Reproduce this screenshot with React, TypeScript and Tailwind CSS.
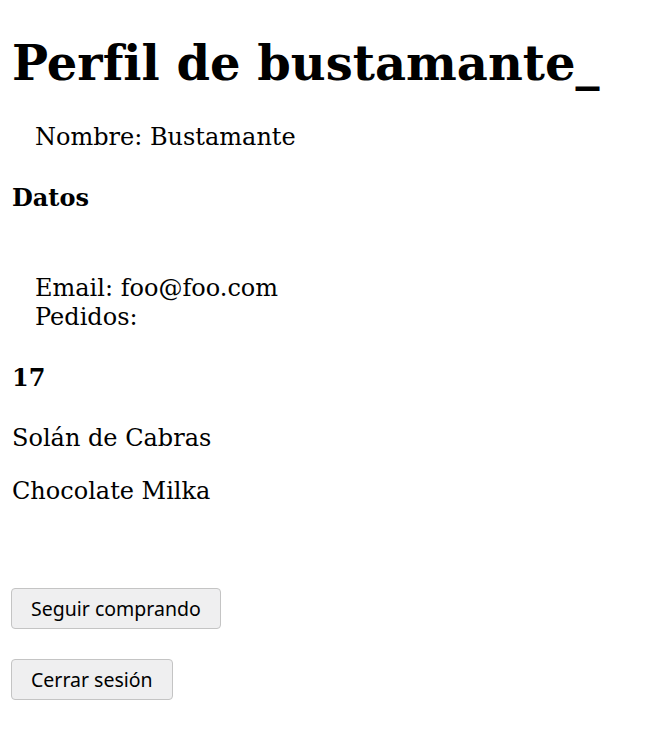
export default function App() {
  return (
    <div className="bg-white px-[12px] pb-[40px] text-black text-[24px] leading-[29px] font-['DejaVu_Serif',serif] [font-variant-ligatures:none]">
      <h1 className="pt-[34px] text-[48px] leading-[58px] font-bold">Perfil de bustamante_</h1>

      <div className="mt-[31px] pl-[23px]">Nombre: Bustamante</div>

      <h4 className="mt-[31px] font-bold">Datos</h4>

      <div className="mt-[62px] pl-[23px]">
        <div>Email: foo@foo.com</div>
        <div>Pedidos:</div>
      </div>

      <h4 className="mt-[31px] font-bold">17</h4>
      <p className="mt-[32px]">Solán de Cabras</p>
      <p className="mt-[24px]">Chocolate Milka</p>

      <div className="mt-[82px] flex flex-col items-start gap-[30px] font-['Noto_Sans',sans-serif]">
        <button className="-ml-px rounded-[4px] border border-[#c4c4c4] bg-[#efeff0] px-[19px] py-[7px] text-[19.5px] leading-[25px] text-black">
          Seguir comprando
        </button>
        <button className="-ml-px rounded-[4px] border border-[#c4c4c4] bg-[#efeff0] px-[19px] py-[7px] text-[19.5px] leading-[25px] text-black">
          Cerrar sesión
        </button>
      </div>
    </div>
  );
}
